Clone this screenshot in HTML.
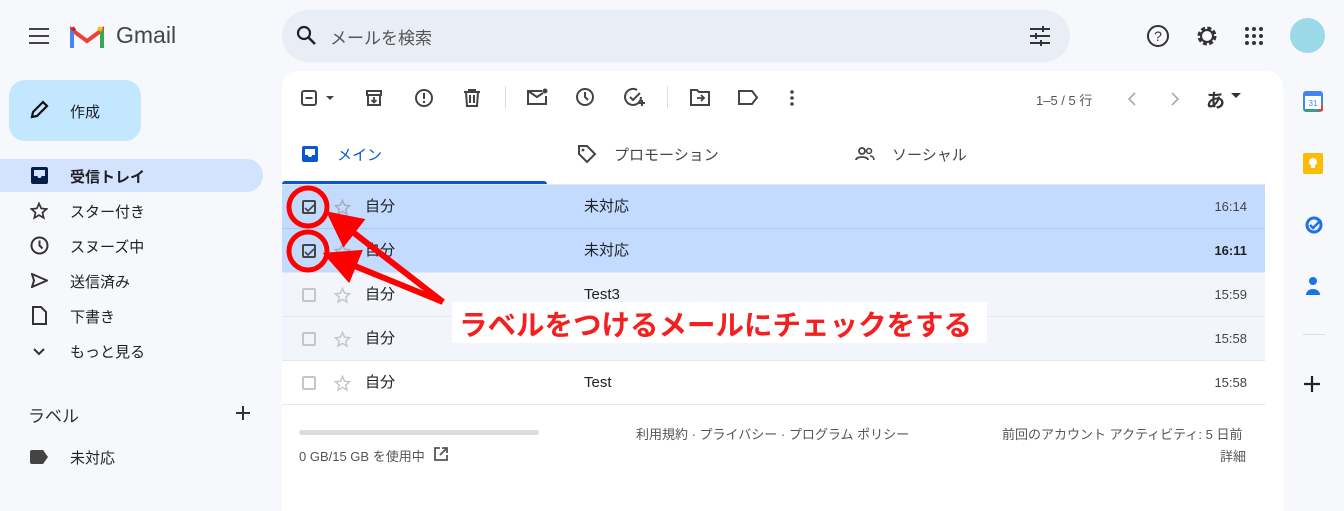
<!DOCTYPE html>
<html><head><meta charset="utf-8"><style>
*{margin:0;padding:0;box-sizing:border-box}
body{width:1344px;height:500px;overflow:hidden;background:#f6f8fc;font-family:"Liberation Sans","Noto Sans CJK JP",sans-serif;color:#202124;position:relative}
.a{position:absolute}
.t{font-size:15px;white-space:nowrap}
.nav{position:absolute;left:70px;font-size:15px;color:#202124}
.ic{position:absolute}
.row{position:absolute;left:282px;width:983px;height:44px;border-bottom:1px solid #e3e6ea}
.cb{position:absolute;left:20px;top:15px;width:14px;height:14px;border:2px solid #c4c7c5;border-radius:2px}
.st{position:absolute;left:52px;top:14px}
.fr,.sb,.tm{position:absolute;top:0;line-height:44px;font-size:15px}
.fr{left:83px}
.sb{left:302px}
.tm{right:18px;font-size:13px;color:#444}
</style></head><body>
<svg class="ic" style="left:28px;top:26px" width="22" height="20"><path d="M1 3h20M1 10h20M1 17h20" stroke="#444" stroke-width="2"/></svg>
<svg class="ic" style="left:70px;top:24px" width="34" height="26" viewBox="0 0 34 26"><path d="M2 24V6l15 11L32 6v18" fill="none" stroke="#ea4335" stroke-width="4"/><path d="M2 24V6" stroke="#4285f4" stroke-width="4"/><path d="M32 24V6" stroke="#34a853" stroke-width="4"/><path d="M28 4l4 2" stroke="#fbbc04" stroke-width="4"/><path d="M2 6l3-2" stroke="#c5221f" stroke-width="4"/></svg>
<div class="a" style="left:116px;top:22px;font-size:23px;color:#444">Gmail</div>
<div class="a" style="left:282px;top:10px;width:788px;height:52px;background:#e9eef6;border-radius:26px"></div>
<svg class="ic" style="left:296px;top:25px" width="22" height="22"><circle cx="8" cy="8" r="6" fill="none" stroke="#222" stroke-width="2.2"/><path d="M12.5 12.5L19 19" stroke="#222" stroke-width="2.5"/></svg>
<div class="a" style="left:330px;top:24px;font-size:17px;color:#555">メールを検索</div>
<svg class="ic" style="left:1029px;top:25px" width="22" height="22"><path d="M1 4h20M1 11h20M1 18h20" stroke="#333" stroke-width="2"/><path d="M14 1v6M7 8v6M12 15v6" stroke="#333" stroke-width="2"/></svg>
<svg class="ic" style="left:1146px;top:24px" width="24" height="24"><circle cx="12" cy="12" r="10" fill="none" stroke="#333" stroke-width="2"/><text x="12" y="17" font-size="14" text-anchor="middle" fill="#333" font-family="Liberation Sans">?</text></svg>
<svg class="ic" style="left:1194px;top:23px" width="26" height="26"><circle cx="13" cy="13" r="8" fill="none" stroke="#333" stroke-width="3" stroke-dasharray="4 2.3"/><circle cx="13" cy="13" r="6" fill="none" stroke="#333" stroke-width="2"/><circle cx="13" cy="13" r="2.5" fill="#fff"/></svg>
<svg class="ic" style="left:1245px;top:27px" width="18" height="18"><g fill="#333"><circle cx="2" cy="2" r="2"/><circle cx="9" cy="2" r="2"/><circle cx="16" cy="2" r="2"/><circle cx="2" cy="9" r="2"/><circle cx="9" cy="9" r="2"/><circle cx="16" cy="9" r="2"/><circle cx="2" cy="16" r="2"/><circle cx="9" cy="16" r="2"/><circle cx="16" cy="16" r="2"/></g></svg>
<div class="a" style="left:1290px;top:18px;width:35px;height:35px;border-radius:50%;background:#9bd9e8"></div>
<div class="a" style="left:9px;top:80px;width:132px;height:61px;background:#c2e7ff;border-radius:16px"></div>
<svg class="ic" style="left:29px;top:100px" width="20" height="20"><path d="M3 17l1-5L14 2l4 4L8 16z" fill="none" stroke="#111" stroke-width="2.2"/></svg>
<div class="a t" style="left:70px;top:101px">作成</div>
<div class="a" style="left:0;top:159px;width:263px;height:33px;background:#d3e3fd;border-radius:0 17px 17px 0"></div>
<svg class="ic" style="left:31px;top:167px" width="17" height="17"><rect x="0" y="0" width="17" height="17" rx="2" fill="#041e49"/><path d="M3 3h11v6h-3.5a2 2 0 0 1-4 0H3z" fill="#d3e3fd"/></svg>
<div class="nav" style="top:166px;font-weight:bold">受信トレイ</div>
<svg class="ic" style="left:30px;top:202px" width="18" height="18"><path d="M9 1.5l2.2 5 5.4.5-4.1 3.6 1.2 5.3L9 13.1 4.3 15.9l1.2-5.3L1.4 7l5.4-.5z" fill="none" stroke="#333" stroke-width="1.7"/></svg>
<div class="nav" style="top:201px">スター付き</div>
<svg class="ic" style="left:30px;top:236px" width="19" height="19"><circle cx="9.5" cy="9.5" r="8" fill="none" stroke="#333" stroke-width="2"/><path d="M9.5 4.5v5l3 3" fill="none" stroke="#333" stroke-width="2"/></svg>
<div class="nav" style="top:236px">スヌーズ中</div>
<svg class="ic" style="left:31px;top:273px" width="17" height="15"><path d="M1 1l15 6.5L1 14l2-6.5z" fill="none" stroke="#333" stroke-width="2"/></svg>
<div class="nav" style="top:271px">送信済み</div>
<svg class="ic" style="left:32px;top:306px" width="15" height="19"><path d="M1 1h8l5 5v12H1z" fill="none" stroke="#333" stroke-width="2"/></svg>
<div class="nav" style="top:306px">下書き</div>
<svg class="ic" style="left:33px;top:348px" width="12" height="8"><path d="M1 1l5 5 5-5" fill="none" stroke="#333" stroke-width="2"/></svg>
<div class="nav" style="top:341px">もっと見る</div>
<div class="a" style="left:28px;top:402px;font-size:17px;color:#333">ラベル</div>
<svg class="ic" style="left:235px;top:405px" width="16" height="16"><path d="M8 1v14M1 8h14" stroke="#333" stroke-width="2"/></svg>
<svg class="ic" style="left:30px;top:450px" width="18" height="14"><path d="M0 2a2 2 0 0 1 2-2h11l5 7-5 7H2a2 2 0 0 1-2-2z" fill="#444"/></svg>
<div class="nav" style="top:447px">未対応</div>
<div class="a" style="left:282px;top:71px;width:1001px;height:440px;background:#fff;border-radius:16px 16px 0 0"></div>
<svg class="ic" style="left:300px;top:89px" width="40" height="18"><rect x="2" y="2" width="14" height="14" rx="2" fill="none" stroke="#444" stroke-width="2"/><path d="M5.5 9h7" stroke="#444" stroke-width="2"/><path d="M26 7h8l-4 4z" fill="#444"/></svg>
<svg class="ic" style="left:365px;top:89px" width="18" height="18"><path d="M2 2h14v4H2zM3 6v10h12V6" fill="none" stroke="#444" stroke-width="2"/><path d="M9 8v5M6.5 11L9 13.5 11.5 11" fill="none" stroke="#444" stroke-width="1.8"/></svg>
<svg class="ic" style="left:414px;top:88px" width="20" height="20"><circle cx="10" cy="10" r="8" fill="none" stroke="#444" stroke-width="2"/><path d="M10 5v6" stroke="#444" stroke-width="2"/><circle cx="10" cy="14" r="1.2" fill="#444"/></svg>
<svg class="ic" style="left:463px;top:88px" width="18" height="20"><path d="M1 4h16M6 4V2h6v2M3 4l1 14h10l1-14M7 7v8M11 7v8" fill="none" stroke="#444" stroke-width="2"/></svg>
<div class="a" style="left:505px;top:86px;width:1px;height:22px;background:#ddd"></div>
<svg class="ic" style="left:527px;top:88px" width="22" height="18"><path d="M15 3H1v13h18V8" fill="none" stroke="#444" stroke-width="2"/><path d="M1 3l9 6 6-4" fill="none" stroke="#444" stroke-width="2"/><circle cx="18" cy="3" r="2.5" fill="#444"/></svg>
<svg class="ic" style="left:575px;top:87px" width="20" height="20"><circle cx="10" cy="10" r="8" fill="none" stroke="#444" stroke-width="2"/><path d="M10 5v5l3 3" fill="none" stroke="#444" stroke-width="2"/></svg>
<svg class="ic" style="left:624px;top:87px" width="22" height="20"><path d="M17 10a8 8 0 1 1-4-7" fill="none" stroke="#444" stroke-width="2"/><path d="M6 10l3 3 7-7M18 13v6M15 16h6" fill="none" stroke="#444" stroke-width="2"/></svg>
<div class="a" style="left:667px;top:86px;width:1px;height:22px;background:#ddd"></div>
<svg class="ic" style="left:690px;top:89px" width="20" height="17"><path d="M1 1h6l2 2h10v13H1z" fill="none" stroke="#444" stroke-width="2"/><path d="M7 9h7M11 6l3 3-3 3" fill="none" stroke="#444" stroke-width="1.8"/></svg>
<svg class="ic" style="left:738px;top:90px" width="21" height="15"><path d="M1 1h13l5 6.5-5 6.5H1z" fill="none" stroke="#444" stroke-width="2"/></svg>
<svg class="ic" style="left:789px;top:89px" width="6" height="18"><circle cx="3" cy="3" r="1.8" fill="#444"/><circle cx="3" cy="9" r="1.8" fill="#444"/><circle cx="3" cy="15" r="1.8" fill="#444"/></svg>
<div class="a" style="left:1036px;top:90px;font-size:13px;color:#555">1–5 / 5 行</div>
<svg class="ic" style="left:1127px;top:92px" width="10" height="14"><path d="M8 1L2 7l6 6" fill="none" stroke="#aaa" stroke-width="1.6"/></svg>
<svg class="ic" style="left:1170px;top:92px" width="10" height="14"><path d="M2 1l6 6-6 6" fill="none" stroke="#aaa" stroke-width="1.6"/></svg>
<div class="a" style="left:1206px;top:86px;font-size:19px;color:#333;font-weight:bold">あ</div>
<svg class="ic" style="left:1231px;top:93px" width="10" height="6"><path d="M0 0h10L5 5z" fill="#333"/></svg>
<svg class="ic" style="left:302px;top:146px" width="16" height="16"><rect width="16" height="16" rx="2" fill="#0b57d0"/><path d="M3 3h10v6h-3a2 2 0 0 1-4 0H3z" fill="#fff"/></svg>
<div class="a t" style="left:337px;top:144px;color:#0b57d0">メイン</div>
<div class="a" style="left:282px;top:181px;width:265px;height:4px;background:#0b57d0;border-radius:3px 3px 0 0"></div>
<svg class="ic" style="left:577px;top:144px" width="20" height="20"><path d="M2 2h8l8 8-8 8-8-8z" fill="none" stroke="#444" stroke-width="2"/><circle cx="6" cy="6" r="1.4" fill="#444"/></svg>
<div class="a t" style="left:614px;top:144px;color:#444">プロモーション</div>
<svg class="ic" style="left:855px;top:147px" width="20" height="14"><circle cx="7" cy="4" r="3" fill="none" stroke="#444" stroke-width="1.8"/><path d="M1 13c0-4 12-4 12 0" fill="none" stroke="#444" stroke-width="1.8"/><circle cx="14" cy="4" r="2.5" fill="none" stroke="#444" stroke-width="1.5"/><path d="M15 9c3 0 4 2 4 4" fill="none" stroke="#444" stroke-width="1.5"/></svg>
<div class="a t" style="left:892px;top:144px;color:#444">ソーシャル</div>
<div class="a" style="left:282px;top:184px;width:983px;height:1px;background:#e3e6ea"></div>
<div class="row" style="top:185px;background:#c2dbff;border-color:#b0c8ea"><div class="cb" style="border-color:#444"></div><svg class="st" width="17" height="17"><path d="M8.5 1.5l2.1 4.7 5.1.5-3.9 3.4 1.1 5L8.5 12.4 4.1 15.1l1.1-5L1.3 6.7l5.1-.5z" fill="none" stroke="#aab" stroke-width="1.5"/></svg><div class="fr">自分</div><div class="sb">未対応</div><div class="tm">16:14</div></div>
<div class="row" style="top:229px;background:#c2dbff"><div class="cb" style="border-color:#444"></div><svg class="st" width="17" height="17"><path d="M8.5 1.5l2.1 4.7 5.1.5-3.9 3.4 1.1 5L8.5 12.4 4.1 15.1l1.1-5L1.3 6.7l5.1-.5z" fill="none" stroke="#aab" stroke-width="1.5"/></svg><div class="fr">自分</div><div class="sb">未対応</div><div class="tm" style="font-weight:bold;color:#222">16:11</div></div>
<div class="row" style="top:273px;background:#f2f6fc"><div class="cb"></div><svg class="st" width="17" height="17"><path d="M8.5 1.5l2.1 4.7 5.1.5-3.9 3.4 1.1 5L8.5 12.4 4.1 15.1l1.1-5L1.3 6.7l5.1-.5z" fill="none" stroke="#c4c7c5" stroke-width="1.5"/></svg><div class="fr">自分</div><div class="sb">Test3</div><div class="tm">15:59</div></div>
<div class="row" style="top:317px;background:#f2f6fc"><div class="cb"></div><svg class="st" width="17" height="17"><path d="M8.5 1.5l2.1 4.7 5.1.5-3.9 3.4 1.1 5L8.5 12.4 4.1 15.1l1.1-5L1.3 6.7l5.1-.5z" fill="none" stroke="#c4c7c5" stroke-width="1.5"/></svg><div class="fr">自分</div><div class="sb">Test2</div><div class="tm">15:58</div></div>
<div class="row" style="top:361px;background:#fff"><div class="cb"></div><svg class="st" width="17" height="17"><path d="M8.5 1.5l2.1 4.7 5.1.5-3.9 3.4 1.1 5L8.5 12.4 4.1 15.1l1.1-5L1.3 6.7l5.1-.5z" fill="none" stroke="#c4c7c5" stroke-width="1.5"/></svg><div class="fr">自分</div><div class="sb">Test</div><div class="tm">15:58</div></div>
<svg class="ic" style="left:304px;top:203px" width="12" height="10"><path d="M1 5l3 3 6-6" fill="none" stroke="#444" stroke-width="1.6"/></svg>
<svg class="ic" style="left:304px;top:247px" width="12" height="10"><path d="M1 5l3 3 6-6" fill="none" stroke="#444" stroke-width="1.6"/></svg>
<div class="a" style="left:299px;top:430px;width:240px;height:5px;background:#dadce0;border-radius:3px"></div>
<div class="a" style="left:299px;top:446px;font-size:13px;color:#555">0 GB/15 GB を使用中</div>
<svg class="ic" style="left:433px;top:446px" width="16" height="16"><path d="M7 2H2v12h12V9M9 2h5v5M14 2L7 9" fill="none" stroke="#555" stroke-width="1.8"/></svg>
<div class="a" style="left:636px;top:424px;font-size:13px;color:#555">利用規約 · プライバシー · プログラム ポリシー</div>
<div class="a" style="left:1002px;top:424px;font-size:13px;color:#555">前回のアカウント アクティビティ: 5 日前</div>
<div class="a" style="left:1220px;top:446px;font-size:13px;color:#555">詳細</div>
<svg class="ic" style="left:1303px;top:91px" width="20" height="21"><rect x="1" y="1" width="18" height="19" rx="2" fill="#fff" stroke="#4285f4" stroke-width="2"/><rect x="1" y="1" width="18" height="4" fill="#4285f4"/><path d="M1 19h14" stroke="#34a853" stroke-width="2"/><path d="M19 14v5h-4" stroke="#ea4335" stroke-width="2" fill="none"/><text x="10" y="15" font-size="8" text-anchor="middle" fill="#4285f4" font-family="Liberation Sans">31</text></svg>
<svg class="ic" style="left:1303px;top:153px" width="20" height="21"><rect width="20" height="21" rx="2" fill="#fbbc04"/><circle cx="10" cy="9" r="4" fill="#fff"/><rect x="8" y="13" width="4" height="2" fill="#fff"/></svg>
<svg class="ic" style="left:1304px;top:215px" width="20" height="20"><circle cx="10" cy="10" r="7" fill="none" stroke="#1a73e8" stroke-width="3"/><path d="M6 10l3 3 8-8" fill="none" stroke="#1a73e8" stroke-width="2.5"/></svg>
<svg class="ic" style="left:1305px;top:276px" width="16" height="20"><circle cx="8" cy="5" r="4" fill="#1a73e8"/><path d="M1 19c0-8 14-8 14 0z" fill="#1a73e8"/></svg>
<div class="a" style="left:1303px;top:334px;width:22px;height:1px;background:#ddd"></div>
<svg class="ic" style="left:1304px;top:376px" width="16" height="16"><path d="M8 0v16M0 8h16" stroke="#222" stroke-width="2.2"/></svg>
<svg class="ic" style="left:0;top:0" width="1344" height="500">
<defs><marker id="ar" markerWidth="6" markerHeight="6" refX="2" refY="3" orient="auto"><path d="M0 0L6 3 0 6z" fill="#f00"/></marker></defs>
<circle cx="308" cy="207" r="19" fill="none" stroke="#f00" stroke-width="5"/>
<circle cx="308" cy="251" r="19" fill="none" stroke="#f00" stroke-width="5"/>
<path d="M443 302L345 226" stroke="#f00" stroke-width="6" marker-end="url(#ar)"/>
<path d="M443 302L345 262" stroke="#f00" stroke-width="6" marker-end="url(#ar)"/>
</svg>
<div class="a" style="left:452px;top:302px;width:535px;height:41px;background:#fff"></div>
<div class="a" style="left:459px;top:303px;font-size:28.5px;font-weight:bold;color:#f42020;white-space:nowrap">ラベルをつけるメールにチェックをする</div>
</body></html>
